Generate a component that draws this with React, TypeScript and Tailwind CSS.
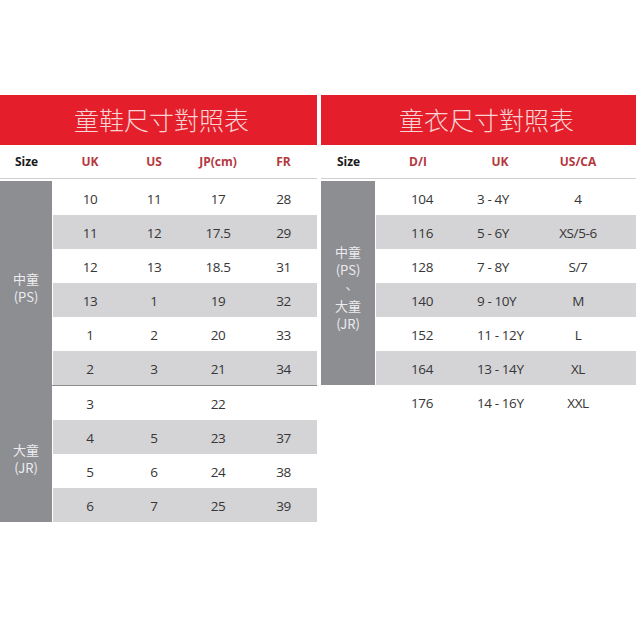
import React from "react";

const cjk = { fontFamily: '"Noto Sans CJK TC", "Noto Sans", sans-serif' };
const num = { fontFamily: '"Open Sans", "Noto Sans CJK TC", sans-serif' };

const shoesPS = [
  ["10", "11", "17", "28"],
  ["11", "12", "17.5", "29"],
  ["12", "13", "18.5", "31"],
  ["13", "1", "19", "32"],
  ["1", "2", "20", "33"],
  ["2", "3", "21", "34"],
];
const shoesJR = [
  ["3", "", "22", ""],
  ["4", "5", "23", "37"],
  ["5", "6", "24", "38"],
  ["6", "7", "25", "39"],
];
const clothes = [
  ["104", "3 - 4Y", "4"],
  ["116", "5 - 6Y", "XS/5-6"],
  ["128", "7 - 8Y", "S/7"],
  ["140", "9 - 10Y", "M"],
  ["152", "11 - 12Y", "L"],
  ["164", "13 - 14Y", "XL"],
];

function ShoeRow({ r, i }: { r: string[]; i: number }) {
  return (
    <div
      className={`h-[34px] pl-[5px] grid grid-cols-[64px_64px_64px_1fr] items-center text-[13.5px] text-[#363636] tracking-[-0.4px] ${
        i % 2 === 1 ? "bg-[#d4d4d6]" : "bg-white"
      }`}
      style={num}
    >
      {r.map((c, j) => (
        <div key={j} className="text-center pt-[3px]">
          {c}
        </div>
      ))}
    </div>
  );
}

function ClothRow({ r, i }: { r: string[]; i: number }) {
  return (
    <div
      className={`h-[34px] grid grid-cols-[84px_80px_1fr] items-center text-[13.5px] text-[#363636] tracking-[-0.4px] ${
        i % 2 === 1 ? "bg-[#d4d4d6]" : "bg-white"
      }`}
      style={num}
    >
      <div className="pl-[35px] pt-[3px]">{r[0]}</div>
      <div className="pl-[17px] pt-[3px]">{r[1]}</div>
      <div className="text-center pr-[20px] pt-[3px]">{r[2]}</div>
    </div>
  );
}

function Label({ lines }: { lines: string[] }) {
  return (
    <div
      className="flex flex-col items-center justify-center text-[13px] leading-[18px] text-[#ececee] pt-[10px]"
      style={cjk}
    >
      {lines.map((l, i) => (
        <div key={i}>{l}</div>
      ))}
    </div>
  );
}

export default function App() {
  return (
    <div className="w-[640px] h-[640px] bg-white pt-[95px] flex gap-[4px]">
      {/* Left: shoes */}
      <div className="w-[317px]">
        <div
          className="h-[50px] bg-[#e41f2b] flex items-center justify-center pl-[6px] text-[25px] font-light text-[#f9d4d4]"
          style={cjk}
        >
          童鞋尺寸對照表
        </div>
        <div
          className="h-[34px] flex items-center text-[12px] font-bold border-b border-[#cfcfcf]"
          style={num}
        >
          <div className="w-[53px] text-center text-[#1a1a1a]">Size</div>
          <div className="flex-1 pl-[5px] grid grid-cols-[64px_64px_64px_1fr] text-[#b5383f]">
            <div className="text-center">UK</div>
            <div className="text-center">US</div>
            <div className="text-center">JP(cm)</div>
            <div className="text-center">FR</div>
          </div>
        </div>
        <div className="mt-[2px]">
          <div className="flex border-b border-[#8d8d91]">
            <div className="w-[52px] mr-[1px] bg-[#8d8e92] flex items-center justify-center">
              <Label lines={["中童", "(PS)"]} />
            </div>
            <div className="flex-1">
              {shoesPS.map((r, i) => (
                <ShoeRow key={i} r={r} i={i} />
              ))}
            </div>
          </div>
          <div className="flex">
            <div className="w-[52px] mr-[1px] bg-[#8d8e92] flex items-center justify-center">
              <Label lines={["大童", "(JR)"]} />
            </div>
            <div className="flex-1">
              {shoesJR.map((r, i) => (
                <ShoeRow key={i} r={r} i={i} />
              ))}
            </div>
          </div>
        </div>
      </div>

      {/* Right: clothes */}
      <div className="w-[315px]">
        <div
          className="h-[50px] bg-[#e41f2b] flex items-center justify-center pl-[16px] text-[25px] font-light text-[#f9d4d4]"
          style={cjk}
        >
          童衣尺寸對照表
        </div>
        <div
          className="h-[34px] flex items-center text-[12px] font-bold border-b border-[#cfcfcf]"
          style={num}
        >
          <div className="w-[55px] text-center text-[#1a1a1a]">Size</div>
          <div className="flex-1 grid grid-cols-[84px_80px_1fr] text-[#b5383f]">
            <div className="text-center">D/I</div>
            <div className="text-center">UK</div>
            <div className="text-center pr-[20px]">US/CA</div>
          </div>
        </div>
        <div className="mt-[2px]">
          <div className="flex">
            <div className="w-[54px] mr-[1px] bg-[#8d8e92] flex items-center justify-center">
              <Label lines={["中童", "(PS)", "、", "大童", "(JR)"]} />
            </div>
            <div className="flex-1">
              {clothes.map((r, i) => (
                <ClothRow key={i} r={r} i={i} />
              ))}
            </div>
          </div>
          <div className="ml-[55px]">
            <ClothRow r={["176", "14 - 16Y", "XXL"]} i={6} />
          </div>
        </div>
      </div>
    </div>
  );
}
